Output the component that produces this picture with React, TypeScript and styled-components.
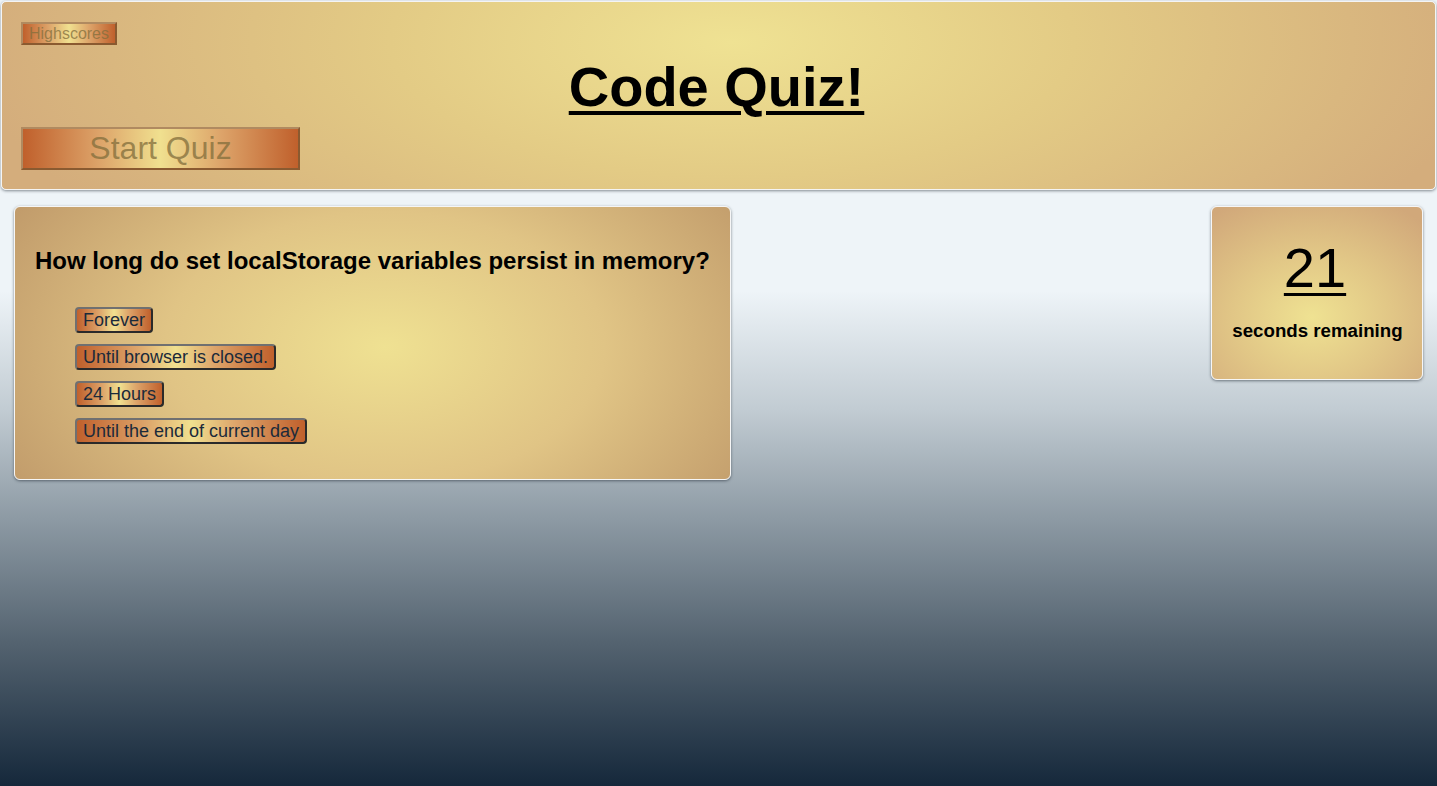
import React from 'react';
import styled, {createGlobalStyle} from 'styled-components';

const GlobalStyle = createGlobalStyle`
  html, body {
    margin: 0;
    padding: 0;
    height: 100%;
  }
  body {
    font-family: "Liberation Sans", Arial, sans-serif;
    background: linear-gradient(180deg, #eef4f8 0%, #eef4f8 37%, #c2ccd3 52%, #8d9aa4 66%, #53626f 82%, #15283b 100%);
    min-height: 786px;
  }
`

const Page = styled.div`
  min-height: 786px;
  padding: 1px;
  box-sizing: border-box;
`

const Header = styled.header`
  position: relative;
  height: 189px;
  box-sizing: border-box;
  padding: 20px 19px 0;
  border-radius: 5px;
  border: 1px solid #f4f4f4;
  background: radial-gradient(ellipse 760px 300px at 730px 40px, #efe293 0%, #e3cb85 45%, #d4ad7c 100%);
  box-shadow: 0 1px 3px rgba(40, 50, 60, 0.55);
`

const Title = styled.h1`
  margin: 0;
  text-align: center;
  font-size: 56px;
  font-weight: bold;
  text-decoration: underline;
  text-decoration-thickness: 4px;
  text-underline-offset: 5px;
  line-height: 1;
  position: absolute;
  left: 0;
  right: 4px;
  top: 57px;
`

const CopperButton = styled.button<{$big?: boolean}>`
  display: block;
  font-family: "Liberation Sans", Arial, sans-serif;
  font-size: ${p => (p.$big ? '32px' : '16px')};
  width: ${p => (p.$big ? '279px' : '96px')};
  height: ${p => (p.$big ? '43px' : '23px')};
  padding: 0;
  color: rgba(130, 110, 60, 0.75);
  background: linear-gradient(90deg, #c0602c 0%, #dda46a 28%, #f0e08f 50%, #dda46a 72%, #c0602c 100%);
  border: 2px solid;
  border-color: #b08a60 #8a5a30 #8a5a30 #b08a60;
  margin-bottom: ${p => (p.$big ? '0' : '82px')};
`

const Main = styled.main`
  display: flex;
  justify-content: space-between;
  align-items: flex-start;
  padding: 16px 13px 0 13px;
`

const Card = styled.section<{$w: string; $h: string}>`
  width: ${p => p.$w};
  height: ${p => p.$h};
  box-sizing: border-box;
  border: 1px solid #f6f6f6;
  border-radius: 6px;
  box-shadow: 0 1px 3px rgba(40, 50, 60, 0.6);
`

const QuestionCard = styled(Card)`
  padding: 40px 20px 0;
  background: radial-gradient(ellipse 440px 270px at 370px 140px, #efe192 0%, #e0c485 50%, #c09a6a 100%);
`

const Question = styled.h2`
  margin: 0 0 32px;
  font-size: 24px;
  font-weight: bold;
  line-height: 28px;
`

const Options = styled.ul`
  list-style: none;
  margin: 0;
  padding: 0 0 0 40px;
  display: flex;
  flex-direction: column;
  align-items: flex-start;
  gap: 11px;
`

const OptionButton = styled.button`
  font-family: "Liberation Sans", Arial, sans-serif;
  font-size: 18px;
  color: #1b2a3a;
  height: 26px;
  padding: 0 6px;
  border-radius: 4px;
  border: 2px solid;
  border-color: #707070 #2a2a2a #2a2a2a #707070;
  background: linear-gradient(90deg, #c0602c 0%, #dda46a 30%, #f0e08f 50%, #dda46a 70%, #c0602c 100%);
`

const TimerCard = styled(Card)`
  padding-top: 33px;
  text-align: center;
  background: radial-gradient(ellipse 160px 130px at 100px 110px, #efe292 0%, #e1c686 50%, #d1a87a 100%);
`

const Seconds = styled.div`
  font-size: 56px;
  line-height: 1;
  text-decoration: underline;
  text-decoration-thickness: 3px;
  text-underline-offset: 6px;
  padding-right: 4px;
`

const Label = styled.div`
  margin-top: 24px;
  font-size: 18.7px;
  font-weight: bold;
  padding-left: 1px;
`

const answers = ['Forever', 'Until browser is closed.', '24 Hours', 'Until the end of current day']

const App = () => {
  return (
    <Page>
      <GlobalStyle/>
      <Header>
        <CopperButton>Highscores</CopperButton>
        <Title>Code Quiz!</Title>
        <CopperButton $big>Start Quiz</CopperButton>
      </Header>
      <Main>
        <QuestionCard $w="717px" $h="274px">
          <Question>How long do set localStorage variables persist in memory?</Question>
          <Options>
            {answers.map((a) => (
              <li key={a}>
                <OptionButton>{a}</OptionButton>
              </li>
            ))}
          </Options>
        </QuestionCard>
        <TimerCard $w="212px" $h="174px">
          <Seconds>21</Seconds>
          <Label>seconds remaining</Label>
        </TimerCard>
      </Main>
    </Page>
  );
};

export default App;
